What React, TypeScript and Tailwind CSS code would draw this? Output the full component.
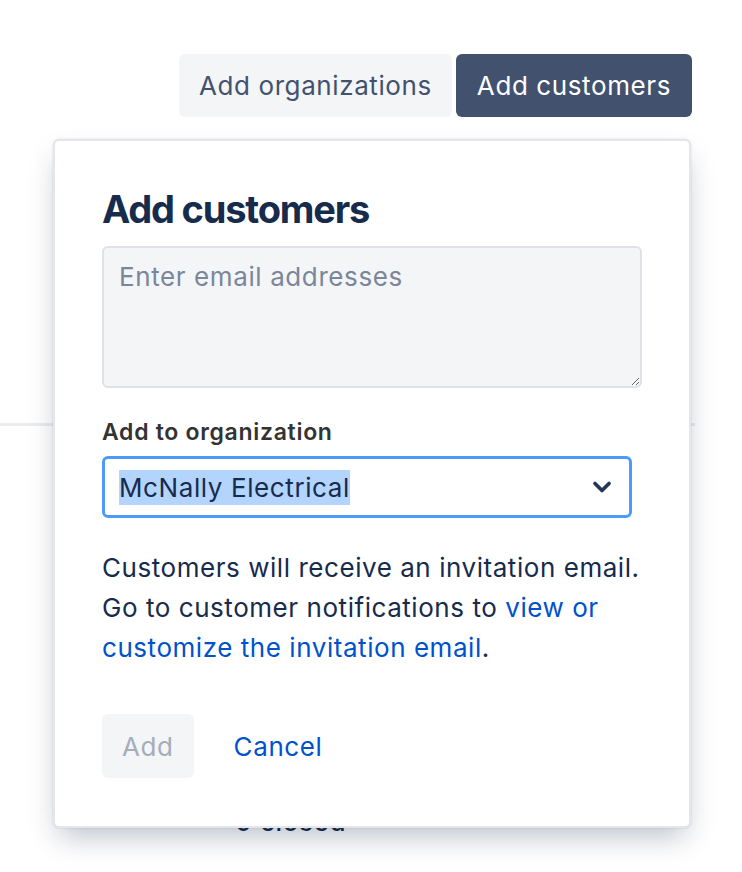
import { ChevronDown } from 'lucide-react';

const font = { fontFamily: 'Inter, "Noto Sans", sans-serif' };

export default function App() {
  return (
    <div className="relative h-[872px] w-[742px] overflow-hidden bg-white text-[#172b4d] tracking-[0.6px]" style={font}>
      <div className="flex justify-end gap-[4px] pr-[50px] pt-[54px]">
        <button className="h-[63px] rounded-[6px] bg-[#f4f5f7] px-[20px] text-[26px] text-[#42526e]">
          Add organizations
        </button>
        <button className="h-[63px] rounded-[6px] bg-[#42526e] px-[21px] text-[26px] text-white">
          Add customers
        </button>
      </div>

      {/* page content behind the dropdown */}
      <div className="mt-[306px] h-[3px] w-[695px] bg-[#ebecf0]" />
      <div className="ml-[235px] mt-[381px] text-[26px] font-medium leading-[30px]">0 closed</div>

      <AddCustomersPanel />
    </div>
  );
}

function AddCustomersPanel() {
  return (
    <div className="absolute left-[53px] top-[139px] h-[689px] w-[638px] rounded-[6px] border-2 border-[#e4e6eb] bg-white px-[47px] pt-[42px] shadow-[0_14px_28px_-6px_rgba(9,30,66,0.28),0_0_2px_rgba(9,30,66,0.15)]">
      <h2 className="text-[38px] font-bold leading-[52px] tracking-[-1.2px]">Add customers</h2>

      <textarea
        placeholder="Enter email addresses"
        className="mt-[11px] block h-[142px] w-[540px] rounded-[6px] border-2 border-[#dfe1e6] bg-[#f4f5f7] px-[15px] py-[12px] text-[26px] leading-[34px] outline-none placeholder:text-[#7a869a]"
      />

      <label className="mt-[29px] block text-[23px] font-semibold leading-[30px] tracking-[0.7px] text-[#333]">
        Add to organization
      </label>
      <div className="mt-[9px] flex h-[62px] w-[530px] items-center justify-between rounded-[6px] border-[3px] border-[#4c9aff] pl-[14px] pr-[13px]">
        <span className="bg-[#b3d4fd] text-[26px] leading-[35px]">McNally Electrical</span>
        <ChevronDown size={28} strokeWidth={3.2} className="text-[#253858]" />
      </div>

      <p className="mt-[30px] text-[26px] leading-[40px] tracking-[0.55px]">
        Customers will receive an invitation email. Go to customer notifications to{' '}
        <a className="text-[#0052cc]">view or customize the invitation email</a>.
      </p>

      <div className="mt-[46px] flex items-center gap-[40px]">
        <button className="h-[64px] rounded-[6px] bg-[#f4f5f7] px-[20px] text-[26px] text-[#a5adba]">Add</button>
        <button className="text-[26px] text-[#0052cc]">Cancel</button>
      </div>
    </div>
  );
}
